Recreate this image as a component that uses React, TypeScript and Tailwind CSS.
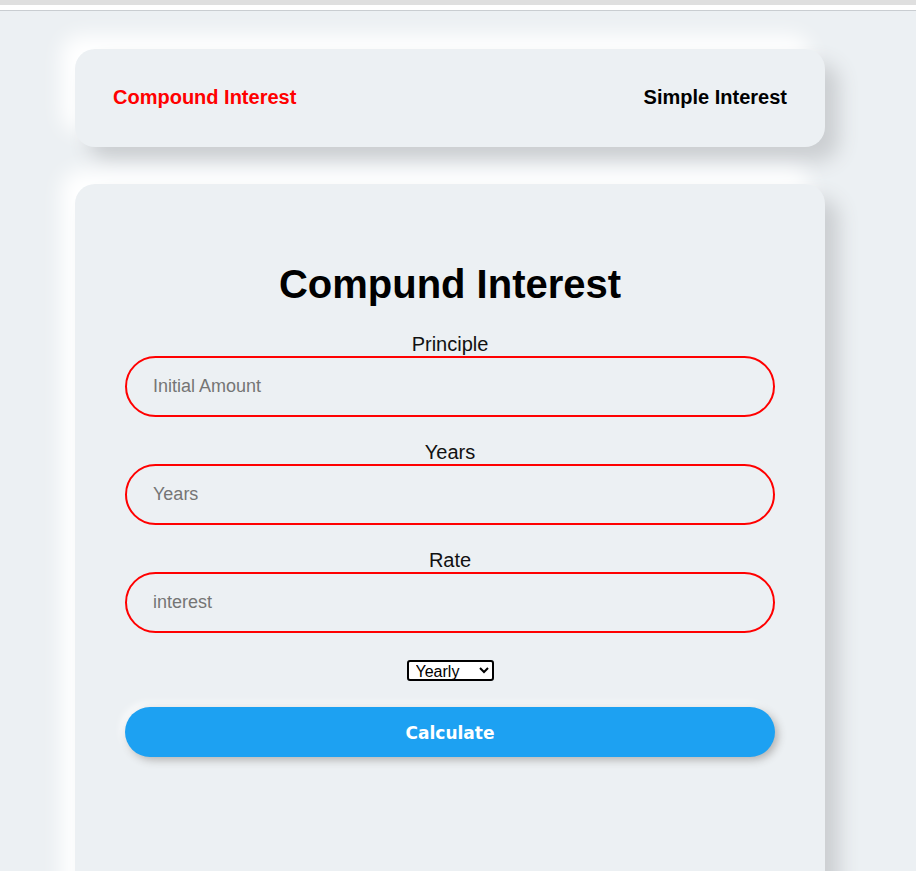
import React, { useState } from 'react';

const fields = [
  { label: 'Principle', placeholder: 'Initial Amount' },
  { label: 'Years', placeholder: 'Years' },
  { label: 'Rate', placeholder: 'interest' },
];

const App: React.FC = () => {
  const [tab, setTab] = useState<'compound' | 'simple'>('compound');

  return (
    <div className="min-h-[871px] bg-[#ecf0f3] font-['Liberation_Sans',Arial,sans-serif] overflow-hidden">
      {/* browser strip */}
      <div className="h-[5px] bg-[#dfdfdf]" />
      <div className="h-[5px] bg-white" />
      <div className="h-px bg-[#c9cdd1]" />

      <div className="w-[750px] ml-[75px] pt-[38px]">
        <nav className="h-[98px] rounded-[20px] bg-[#ecf0f3] shadow-[14px_14px_20px_#cbced1,-14px_-14px_20px_#ffffff] flex items-center justify-between px-[38px] pb-[2px]">
          <button
            onClick={() => setTab('compound')}
            className={`text-[20px] leading-[22px] font-bold ${tab === 'compound' ? 'text-[#ff0000]' : 'text-black'}`}
          >
            Compound Interest
          </button>
          <button
            onClick={() => setTab('simple')}
            className={`text-[20px] leading-[22px] font-bold ${tab === 'simple' ? 'text-[#ff0000]' : 'text-black'}`}
          >
            Simple Interest
          </button>
        </nav>

        <main className="mt-[37px] h-[760px] rounded-[20px] bg-[#ecf0f3] shadow-[14px_14px_20px_#cbced1,-14px_-14px_20px_#ffffff] px-[50px] pt-[77px] flex flex-col items-center">
          <h1 className="text-[40px] leading-[46px] font-bold text-black">Compund Interest</h1>

          <div className="w-full mt-[26px] flex flex-col">
            {fields.map((f, i) => (
              <div key={f.label} className={`flex flex-col items-center ${i > 0 ? 'mt-[24px]' : ''}`}>
                <label className="text-[20px] leading-[23px] text-[#111]">{f.label}</label>
                <input
                  type="text"
                  placeholder={f.placeholder}
                  className="w-full h-[61px] rounded-full border-2 border-[#ff0000] bg-transparent px-[26px] text-[18px] text-black placeholder:text-[#757575] outline-none"
                />
              </div>
            ))}
          </div>

          <select className="mt-[27px] w-[87px] h-[21px] border-2 border-black rounded-[3px] bg-white text-[16px] leading-none text-black pl-[3px]">
            <option>Yearly</option>
            <option>Monthly</option>
            <option>Quarterly</option>
          </select>

          <button className="mt-[26px] w-full h-[50px] rounded-full bg-[#1da1f2] text-white text-[17px] font-bold font-['DejaVu_Sans',sans-serif] pt-[4px] shadow-[3px_3px_8px_#b1b1b1,-3px_-3px_8px_#ffffff]">
            Calculate
          </button>
        </main>
      </div>
    </div>
  );
};

export default App;
